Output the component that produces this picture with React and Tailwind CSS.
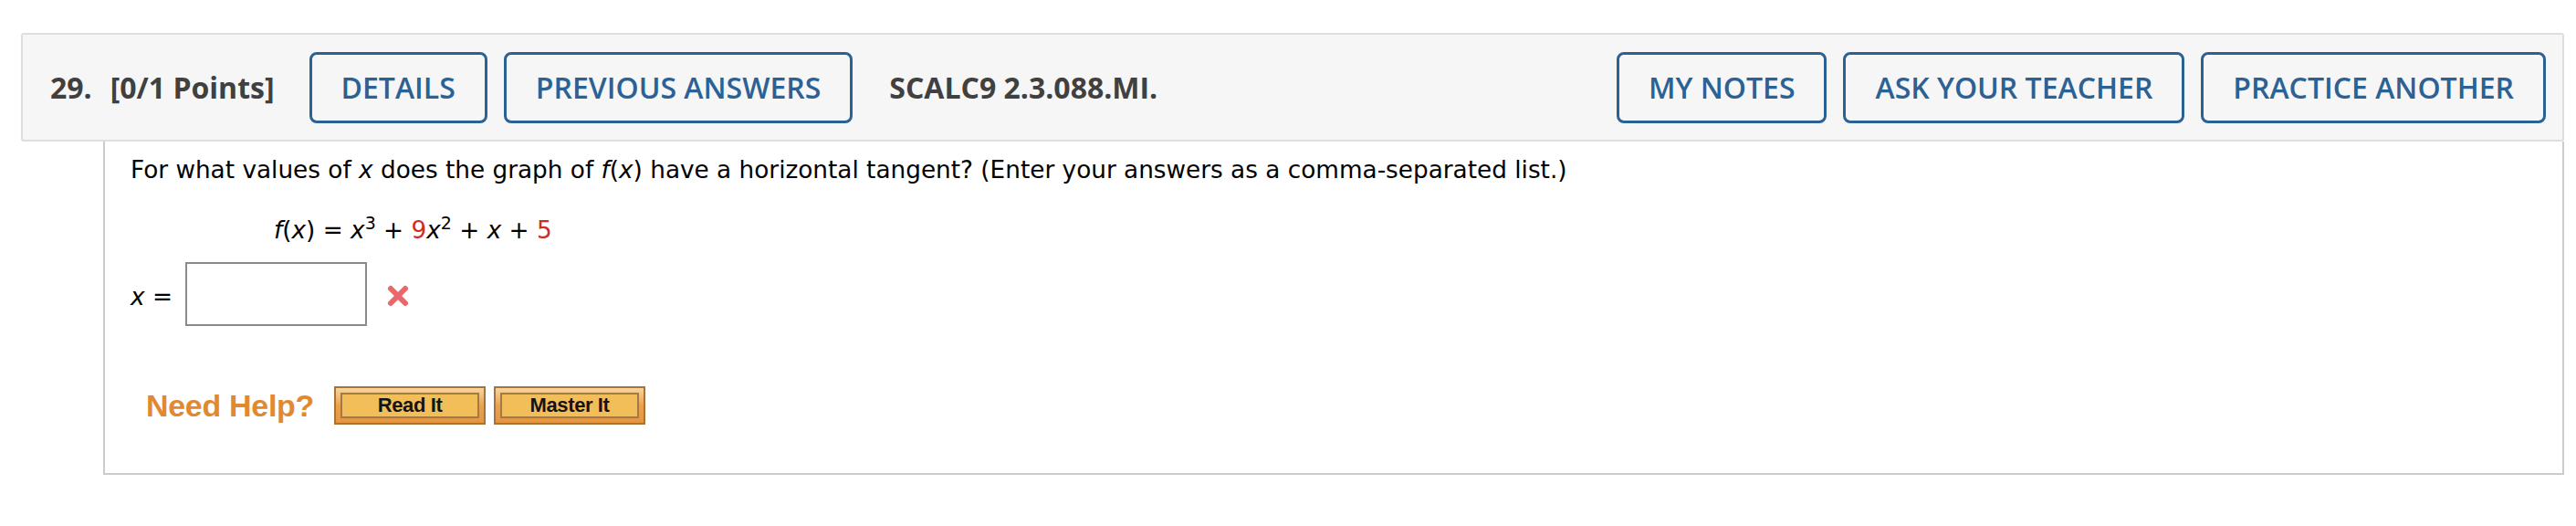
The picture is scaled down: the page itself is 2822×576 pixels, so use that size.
const HEAD = { fontFamily: '"Open Sans", "Liberation Sans", sans-serif' };
const BODY = { fontFamily: '"DejaVu Sans", Verdana, sans-serif' };
const HELP = { fontFamily: '"Liberation Sans", Arial, sans-serif' };

const OutlineButton = ({ children }) => (
  <button
    className="h-[78px] px-[32px] rounded-[8px] border-[3px] border-[#2c6194] text-[#2c6194] text-[32px] font-semibold leading-none"
    style={HEAD}
  >
    {children}
  </button>
);

const HelpButton = ({ children }) => (
  <div className="w-[166px] h-[42px] border-2 border-[#a6733a] bg-gradient-to-b from-[#f8d59a] via-[#eba24d] to-[#e5953f] p-[5px]">
    <div
      className="h-full border-2 border-[#a27a45] bg-[#f2be5a] flex items-center justify-center text-[22px] font-bold text-[#141414] leading-none tracking-[-0.4px]"
      style={HELP}
    >
      {children}
    </div>
  </div>
);

const Var = ({ children }) => <i className="italic">{children}</i>;

const Sup = ({ children }) => (
  <sup className="text-[19px] align-baseline relative -top-[10px]">{children}</sup>
);

const App = () => {
  return (
    <div className="w-[2822px] h-[576px] bg-white pt-[36px] pl-[23px] pr-[13px]">
      <div className="h-[119px] bg-[#f6f6f6] border-2 border-[#dedede] rounded-[3px] flex items-center pl-[30px] pr-[18px]">
        <span className="text-[32px] font-bold text-[#404040]" style={HEAD}>
          29.
        </span>
        <span className="ml-[20px] text-[32px] font-bold text-[#404040]" style={HEAD}>
          [0/1 Points]
        </span>
        <div className="ml-[38px] flex gap-[18px]">
          <OutlineButton>DETAILS</OutlineButton>
          <OutlineButton>PREVIOUS ANSWERS</OutlineButton>
        </div>
        <span className="ml-[40px] text-[32px] font-bold text-[#404040]" style={HEAD}>
          SCALC9 2.3.088.MI.
        </span>
        <div className="ml-auto flex gap-[18px]">
          <OutlineButton>MY NOTES</OutlineButton>
          <OutlineButton>ASK YOUR TEACHER</OutlineButton>
          <OutlineButton>PRACTICE ANOTHER</OutlineButton>
        </div>
      </div>

      <div
        className="ml-[90px] h-[365px] border-x-2 border-b-2 border-[#cccccc] pl-[28px] pt-[16px] text-[26.3px] text-black leading-[30px]"
        style={BODY}
      >
        <p>
          For what values of <Var>x</Var> does the graph of <Var>f</Var>(<Var>x</Var>) have a horizontal
          tangent? (Enter your answers as a comma-separated list.)
        </p>

        <p className="mt-[36px] ml-[157px] whitespace-nowrap">
          <Var>f</Var>(<Var>x</Var>) = <Var>x</Var>
          <Sup>3</Sup> + <span className="text-[#d22b1f]">9</span>
          <Var>x</Var>
          <Sup>2</Sup> + <Var>x</Var> + <span className="text-[#d22b1f]">5</span>
        </p>

        <div className="mt-[20px] flex items-center">
          <span className="mt-[6px]">
            <Var>x</Var> =
          </span>
          <div className="ml-[14px] w-[199px] h-[70px] border-2 border-[#8a8a8a] bg-white" />
          <svg className="ml-[21px] mt-[4px]" width="26" height="26" viewBox="0 0 26 26">
            <path
              d="M5 5 L21 21 M21 5 L5 21"
              stroke="#e8686b"
              strokeWidth="6"
              strokeLinecap="round"
            />
          </svg>
        </div>

        <div className="mt-[66px] ml-[17px] flex items-center">
          <span className="text-[34px] font-bold text-[#e2892f] leading-none mr-[22px] tracking-[-0.3px]" style={HELP}>
            Need Help?
          </span>
          <HelpButton>Read It</HelpButton>
          <div className="ml-[9px]">
            <HelpButton>Master It</HelpButton>
          </div>
        </div>
      </div>
    </div>
  );
};

export default App;
